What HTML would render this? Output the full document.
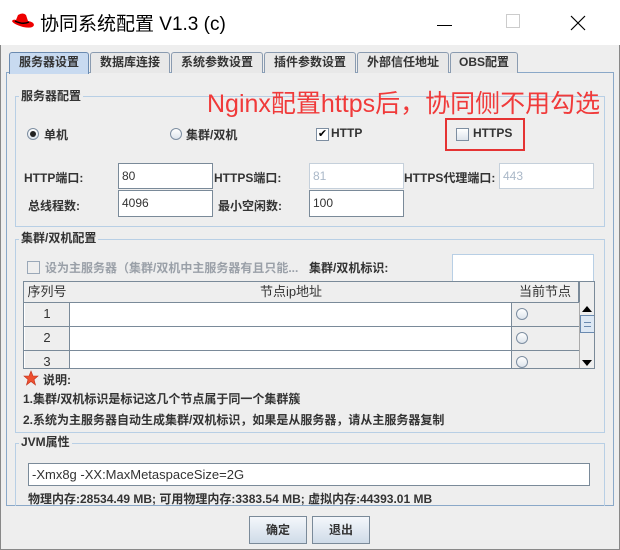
<!DOCTYPE html><html><head><meta charset="utf-8"><style>
*{box-sizing:border-box;margin:0;padding:0}
body{width:620px;height:550px;background:#eeeeee;font-family:"Liberation Sans","Noto Sans CJK SC",sans-serif;font-size:12px;color:#333;position:relative;overflow:hidden}
.a{position:absolute}
.b{font-weight:bold}
.tab{position:absolute;top:52px;height:21px;border:1px solid #8a9bb0;border-bottom:none;background:#e8e8e8;font-weight:bold;font-size:12px;text-align:center;line-height:19px;border-radius:3px 3px 0 0}
.grp{position:absolute;border:1px solid #b8cfe5}
.lg{position:absolute;background:#eeeeee;font-weight:bold;padding:0 2px;line-height:14px}
.in{position:absolute;background:#fff;border:1px solid #7a8a99;font-size:12px;padding-left:3px;line-height:24px}
.rad{position:absolute;width:12px;height:12px;border-radius:50%;border:1px solid #7d8ea1;background:linear-gradient(#fff,#dde4ec)}
.btn{position:absolute;top:516px;width:58px;height:28px;border:1px solid #7a8a99;background:linear-gradient(#f4f7fb,#cfdbe8);font-weight:bold;text-align:center;line-height:26px}
.h{position:absolute;top:0;height:20px;border-right:1px solid #7a8a99;text-align:center;line-height:20px;font-size:13px;background:#eee}
.r{position:absolute;left:0;width:555px;height:24px;border-top:1px solid #7a8a99}
.n{position:absolute;left:0;width:46px;height:100%;border-right:1px solid #7a8a99;background:#eee;text-align:center;line-height:22px;font-size:13px;border-left:1px solid #fff}
.w{position:absolute;left:46px;width:442px;height:100%;background:#fff;border-right:1px solid #7a8a99}
</style></head><body>
<div class="a" style="left:0;top:0;width:620px;height:45px;background:#fff"></div>
<svg class="a" style="left:11px;top:12px" width="24" height="20" viewBox="0 0 24 20"><path d="M7 3 Q12 0 15 3 L17 9 Q23 10 23 13 Q22 17 12 15 Q2 12 1 9 Q2 7 5 8 Z" fill="#e00"/><path d="M4 9 Q12 13 18 10" stroke="#000" stroke-width="1.5" fill="none"/></svg>
<div class="a" style="left:40px;top:9px;font-size:19px;color:#000">协同系统配置 V1.3 (c)</div>
<div class="a" style="left:437px;top:25px;width:15px;height:1px;background:#000"></div>
<div class="a" style="left:506px;top:14px;width:14px;height:14px;border:1px solid #ccc"></div>
<svg class="a" style="left:570px;top:15px" width="16" height="16"><path d="M1 1L15 15M15 1L1 15" stroke="#000" stroke-width="1.2"/></svg>
<div class="a" style="left:0;top:45px;width:620px;height:505px;border:1px solid #888;border-top:none"></div>
<div class="a" style="left:6px;top:72px;width:608px;height:434px;border:1px solid #8aa8c8"></div>
<div class="tab" style="left:9px;width:80px;background:#c8daf0;border-color:#6a8ab0;height:22px">服务器设置</div>
<div class="tab" style="left:90px;width:80px">数据库连接</div>
<div class="tab" style="left:171px;width:92px">系统参数设置</div>
<div class="tab" style="left:264px;width:92px">插件参数设置</div>
<div class="tab" style="left:357px;width:92px">外部信任地址</div>
<div class="tab" style="left:450px;width:68px">OBS配置</div>
<div class="grp" style="left:15px;top:96px;width:590px;height:131px"></div>
<div class="lg" style="left:19px;top:89px">服务器配置</div>
<div class="a" style="left:207px;top:84px;font-size:25px;color:#f03a3a;white-space:nowrap">Nginx配置https后，协同侧不用勾选</div>
<div class="rad" style="left:27px;top:128px"><div style="width:6px;height:6px;border-radius:50%;background:#222;margin:2px"></div></div>
<div class="a b" style="left:44px;top:126px">单机</div>
<div class="rad" style="left:170px;top:128px"></div>
<div class="a b" style="left:186px;top:126px">集群/双机</div>
<div class="a" style="left:316px;top:128px;width:13px;height:13px;border:1px solid #7d8ea1;background:#fff;font-size:11px;line-height:11px;text-align:center;color:#000">✔</div>
<div class="a b" style="left:331px;top:126px">HTTP</div>
<div class="a" style="left:445px;top:118px;width:80px;height:33px;border:2px solid #e53333"></div>
<div class="a" style="left:456px;top:128px;width:13px;height:13px;border:1px solid #7d8ea1;background:linear-gradient(#fff,#dde4ec)"></div>
<div class="a b" style="left:473px;top:126px">HTTPS</div>
<div class="a b" style="left:24px;top:169px">HTTP端口:</div>
<div class="in" style="left:118px;top:163px;width:95px;height:26px">80</div>
<div class="a b" style="left:214px;top:169px">HTTPS端口:</div>
<div class="in" style="left:309px;top:163px;width:95px;height:26px;border-color:#c5d0db;color:#aab8c8">81</div>
<div class="a b" style="left:404px;top:169px">HTTPS代理端口:</div>
<div class="in" style="left:499px;top:163px;width:95px;height:26px;border-color:#c5d0db;color:#aab8c8">443</div>
<div class="a b" style="left:28px;top:197px">总线程数:</div>
<div class="in" style="left:118px;top:190px;width:95px;height:27px">4096</div>
<div class="a b" style="left:218px;top:197px">最小空闲数:</div>
<div class="in" style="left:309px;top:190px;width:95px;height:27px">100</div>
<div class="grp" style="left:15px;top:239px;width:590px;height:194px"></div>
<div class="lg" style="left:19px;top:231px">集群/双机配置</div>
<div class="a" style="left:27px;top:261px;width:13px;height:13px;border:1px solid #9aa8b8"></div>
<div class="a b" style="left:45px;top:259px;color:#9aa0a8">设为主服务器（集群/双机中主服务器有且只能...</div>
<div class="a b" style="left:309px;top:259px">集群/双机标识:</div>
<div class="a" style="left:452px;top:254px;width:142px;height:29px;background:#fff;border:1px solid #b8cfe5"></div>
<div class="a" style="left:23px;top:281px;width:572px;height:88px;border:1px solid #7a8a99;background:#eee;overflow:hidden">
 <div class="h" style="left:0;width:47px">序列号</div>
 <div class="h" style="left:46px;width:443px">节点ip地址</div>
 <div class="h" style="left:488px;width:67px">当前节点</div>
 <div class="r" style="top:20px"><div class="n">1</div><div class="w"></div><div class="rad" style="left:492px;top:5px"></div></div>
 <div class="r" style="top:44px"><div class="n">2</div><div class="w"></div><div class="rad" style="left:492px;top:5px"></div></div>
 <div class="r" style="top:68px"><div class="n">3</div><div class="w"></div><div class="rad" style="left:492px;top:5px"></div></div>
 <div class="a" style="left:555px;top:0;width:1px;height:20px;background:#7a8a99"></div>
 <div class="a" style="left:555px;top:20px;width:16px;height:68px;background:#eee;border-left:1px solid #aaa"></div>
 <svg class="a" style="left:558px;top:24px" width="10" height="6"><path d="M5 0L10 6H0Z" fill="#000"/></svg>
 <div class="a" style="left:556px;top:33px;width:15px;height:18px;border:1px solid #6a8ab0;background:#dde8f4"><div style="margin:6px 3px;height:5px;border-top:1px solid #6a8ab0;border-bottom:1px solid #6a8ab0"></div></div>
 <svg class="a" style="left:558px;top:78px" width="10" height="6"><path d="M0 0H10L5 6Z" fill="#000"/></svg>
</div>
<svg class="a" style="left:23px;top:370px" width="16" height="16" viewBox="0 0 16 16"><path d="M8 1L10 6H15L11 9.5L12.5 15L8 11.5L3.5 15L5 9.5L1 6H6Z" fill="#ee5030" stroke="#c0301a" stroke-width=".6"/></svg>
<div class="a b" style="left:43px;top:371px">说明:</div>
<div class="a b" style="left:23px;top:390px">1.集群/双机标识是标记这几个节点属于同一个集群簇</div>
<div class="a b" style="left:23px;top:411px">2.系统为主服务器自动生成集群/双机标识，如果是从服务器，请从主服务器复制</div>
<div class="grp" style="left:15px;top:443px;width:590px;height:63px;border-bottom:none"></div>
<div class="lg" style="left:19px;top:435px">JVM属性</div>
<div class="in" style="left:28px;top:463px;width:562px;height:23px;line-height:21px;font-size:13px">-Xmx8g -XX:MaxMetaspaceSize=2G</div>
<div class="a b" style="left:28px;top:490px">物理内存:28534.49 MB; 可用物理内存:3383.54 MB; 虚拟内存:44393.01 MB</div>
<div class="btn" style="left:249px">确定</div>
<div class="btn" style="left:312px">退出</div>
</body></html>
